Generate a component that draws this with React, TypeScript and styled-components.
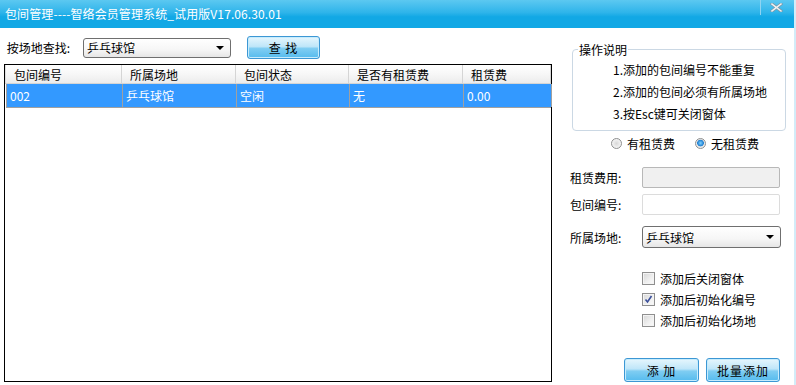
import React from 'react';
import styled, { createGlobalStyle } from 'styled-components';

const GlobalStyle = createGlobalStyle`
   html, body {
      margin: 0;
      padding: 0;
      background: #ffffff;
   }
   body {
      font-family: "Noto Sans CJK SC", "DejaVu Sans", sans-serif;
      font-size: 12px;
      color: #000;
   }
   * {
      box-sizing: border-box;
   }
`;

const Window = styled.div`
   width: 796px;
   height: 385px;
   display: flex;
   flex-direction: column;
   background: #ffffff;
   border-right: 2px solid #d3ecf8;
   overflow: hidden;
`;

const TitleBar = styled.div`
   height: 28px;
   flex-shrink: 0;
   display: flex;
   align-items: flex-start;
   justify-content: space-between;
   background: linear-gradient(to bottom, #5cc8f1 0%, #2eb4ea 45%, #12a8e5 60%, #12a8e5 100%);
`;

const Title = styled.div`
   padding-left: 5px;
   line-height: 28px;
   font-size: 12px;
   color: #ffffff;
   letter-spacing: 0.1px;
`;

const CloseBox = styled.div`
   width: 31px;
   height: 15px;
   margin-right: 3px;
   display: flex;
   align-items: center;
   justify-content: center;
   border-left: 1px solid #8fd4f2;
`;

const Body = styled.div`
   flex: 1;
   display: flex;
`;

const LeftPane = styled.div`
   width: 548px;
   margin-left: 4px;
   display: flex;
   flex-direction: column;
`;

const SearchRow = styled.div`
   height: 23px;
   margin-top: 8px;
   display: flex;
   align-items: center;
`;

const Label = styled.span<{ $w: number }>`
   width: ${({ $w }) => $w}px;
   flex-shrink: 0;
   white-space: nowrap;
`;

const SelectBox = styled.div<{ $w: number; $h: number }>`
   width: ${({ $w }) => $w}px;
   height: ${({ $h }) => $h}px;
   display: flex;
   align-items: center;
   justify-content: space-between;
   padding: 0 6px 0 3px;
   border: 1px solid #6f6f6f;
   border-radius: 3px;
   background: linear-gradient(to bottom, #ffffff 0%, #f6f6f6 60%, #e6e6e6 100%);
`;

const Arrow = styled.span`
   width: 0;
   height: 0;
   border-left: 4px solid transparent;
   border-right: 4px solid transparent;
   border-top: 4px solid #000;
`;

const BlueButton = styled.button<{ $w: number; $h: number }>`
   width: ${({ $w }) => $w}px;
   height: ${({ $h }) => $h}px;
   padding: 0;
   font-family: inherit;
   font-size: 12px;
   color: #000;
   border: 1px solid #3c97d4;
   border-radius: 3px;
   box-shadow: inset 0 0 0 1px #c6ecfd;
   background: linear-gradient(to bottom, #e6f6fd 0%, #bfe6f9 45%, #7fcdf2 55%, #55bbee 100%);
   letter-spacing: 1px;
`;

const Grid = styled.div`
   margin-top: 5px;
   height: 318px;
   border: 1px solid #000;
   background: #fff;
`;

const GridRow = styled.div<{ $head?: boolean }>`
   display: grid;
   grid-template-columns: 117px 114px 113px 114px 88px;
   height: ${({ $head }) => ($head ? 19 : 24)}px;
   margin-left: ${({ $head }) => ($head ? 0 : 1)}px;
   background: ${({ $head }) =>
      $head ? 'linear-gradient(to bottom, #ffffff 0%, #f7f7f7 50%, #ececec 100%)' : '#3399ff'};
   color: ${({ $head }) => ($head ? '#000' : '#fff')};
   border-bottom: 1px solid ${({ $head }) => ($head ? '#d5d5d5' : '#a0a0a0')};
`;

const Cell = styled.div<{ $head?: boolean }>`
   display: flex;
   align-items: center;
   padding-left: ${({ $head }) => ($head ? 8 : 3)}px;
   border-right: 1px solid ${({ $head }) => ($head ? '#d5d5d5' : '#a0a0a0')};
   white-space: nowrap;
   overflow: hidden;
   &:first-child {
      border-left: 1px solid ${({ $head }) => ($head ? '#e0e0e0' : '#a0a0a0')};
   }
`;

const RightPane = styled.div`
   width: 216px;
   margin-left: 18px;
   padding-top: 13px;
   padding-bottom: 3px;
   display: flex;
   flex-direction: column;
`;

const Group = styled.fieldset`
   margin: 0 0 0 2px;
   width: 214px;
   height: 90px;
   padding: 1px 0 0 0;
   border: 1px solid #cbd8e4;
   border-radius: 4px;
`;

const Legend = styled.legend`
   padding: 0 1px;
   margin-left: 5px;
   font-size: 12px;
   line-height: 17px;
`;

const NoteLine = styled.div`
   padding-left: 40px;
   line-height: 22px;
   white-space: nowrap;
`;

const RadioRow = styled.div`
   height: 20px;
   margin-top: 2px;
   padding-left: 41px;
   display: flex;
   align-items: center;
   gap: 20px;
`;

const RadioItem = styled.label`
   display: flex;
   align-items: center;
   gap: 5px;
`;

const RadioDot = styled.span<{ $on?: boolean }>`
   width: 11px;
   height: 11px;
   border-radius: 50%;
   border: 1px solid #8e8f8f;
   background: ${({ $on }) =>
      $on
         ? 'radial-gradient(circle at 50% 45%, #7fd2ff 0%, #1f7fd0 45%, #e8e8e8 55%, #f8f8f8 100%)'
         : 'radial-gradient(circle, #d8d8d8 0%, #f4f4f4 70%, #ffffff 100%)'};
`;

const FieldRow = styled.div<{ $mt: number }>`
   margin-top: ${({ $mt }) => $mt}px;
   display: flex;
   align-items: center;
`;

const TextBox = styled.div<{ $disabled?: boolean }>`
   width: 138px;
   height: 21px;
   border: 1px solid ${({ $disabled }) => ($disabled ? '#b8b8b8' : '#dcdcdc')};
   border-radius: 2px;
   background: ${({ $disabled }) => ($disabled ? '#f0f0f0' : '#ffffff')};
`;

const CheckList = styled.div`
   margin-top: 20px;
   padding-left: 72px;
   display: flex;
   flex-direction: column;
`;

const CheckItem = styled.label`
   height: 21px;
   display: flex;
   align-items: center;
   gap: 5px;
`;

const CheckBox = styled.span`
   width: 13px;
   height: 13px;
   display: flex;
   align-items: center;
   justify-content: center;
   border: 1px solid #8f8f8f;
   background: linear-gradient(135deg, #d6d6d6 0%, #f0f0f0 60%, #fbfbfb 100%);
   box-shadow: inset 0 0 0 1px #f4f4f4;
`;

const ButtonRow = styled.div`
   margin-top: auto;
   padding-right: 6px;
   display: flex;
   justify-content: flex-end;
   gap: 7px;
`;

const columns = ['包间编号', '所属场地', '包间状态', '是否有租赁费', '租赁费'];
const rows = [['002', '乒乓球馆', '空闲', '无', '0.00']];

const notes = ['1.添加的包间编号不能重复', '2.添加的包间必须有所属场地', '3.按Esc键可关闭窗体'];

const checks = [
   { text: '添加后关闭窗体', on: false },
   { text: '添加后初始化编号', on: true },
   { text: '添加后初始化场地', on: false },
];

const App: React.FC = () => {
   return (
      <>
         <GlobalStyle />
         <Window>
            <TitleBar>
               <Title>包间管理----智络会员管理系统_试用版V17.06.30.01</Title>
               <CloseBox>
                  <svg width="13" height="9" viewBox="0 0 13 9">
                     <path
                        d="M2 1 L11 8 M11 1 L2 8"
                        stroke="#7f98a6"
                        strokeWidth="3"
                        strokeLinecap="square"
                     />
                     <path
                        d="M2 1 L11 8 M11 1 L2 8"
                        stroke="#eef3f6"
                        strokeWidth="1.5"
                        strokeLinecap="square"
                     />
                  </svg>
               </CloseBox>
            </TitleBar>
            <Body>
               <LeftPane>
                  <SearchRow>
                     <Label $w={79}>&nbsp;按场地查找:</Label>
                     <SelectBox $w={148} $h={20}>
                        <span>乒乓球馆</span>
                        <Arrow />
                     </SelectBox>
                     <span style={{ width: 16 }} />
                     <BlueButton $w={73} $h={23}>
                        查&nbsp;找
                     </BlueButton>
                  </SearchRow>
                  <Grid>
                     <GridRow $head>
                        {columns.map((c) => (
                           <Cell $head key={c}>
                              {c}
                           </Cell>
                        ))}
                     </GridRow>
                     {rows.map((r) => (
                        <GridRow key={r[0]}>
                           {r.map((v, i) => (
                              <Cell key={`${r[0]}-${i}`}>{v}</Cell>
                           ))}
                        </GridRow>
                     ))}
                  </Grid>
               </LeftPane>
               <RightPane>
                  <Group>
                     <Legend>操作说明</Legend>
                     {notes.map((n) => (
                        <NoteLine key={n}>{n}</NoteLine>
                     ))}
                  </Group>
                  <RadioRow>
                     <RadioItem>
                        <RadioDot />
                        有租赁费
                     </RadioItem>
                     <RadioItem>
                        <RadioDot $on />
                        无租赁费
                     </RadioItem>
                  </RadioRow>
                  <FieldRow $mt={14}>
                     <Label $w={72}>租赁费用:</Label>
                     <TextBox $disabled />
                  </FieldRow>
                  <FieldRow $mt={6}>
                     <Label $w={72}>包间编号:</Label>
                     <TextBox />
                  </FieldRow>
                  <FieldRow $mt={11}>
                     <Label $w={72}>所属场地:</Label>
                     <SelectBox $w={139} $h={22}>
                        <span>乒乓球馆</span>
                        <Arrow />
                     </SelectBox>
                  </FieldRow>
                  <CheckList>
                     {checks.map((c) => (
                        <CheckItem key={c.text}>
                           <CheckBox>
                              {c.on && (
                                 <svg width="9" height="9" viewBox="0 0 9 9">
                                    <path
                                       d="M1.5 4.5 L3.5 7 L7.5 1"
                                       stroke="#3a4f9a"
                                       strokeWidth="1.6"
                                       fill="none"
                                    />
                                 </svg>
                              )}
                           </CheckBox>
                           {c.text}
                        </CheckItem>
                     ))}
                  </CheckList>
                  <ButtonRow>
                     <BlueButton $w={75} $h={24}>
                        添&nbsp;加
                     </BlueButton>
                     <BlueButton $w={74} $h={24}>
                        批量添加
                     </BlueButton>
                  </ButtonRow>
               </RightPane>
            </Body>
         </Window>
      </>
   );
};

export default App;
